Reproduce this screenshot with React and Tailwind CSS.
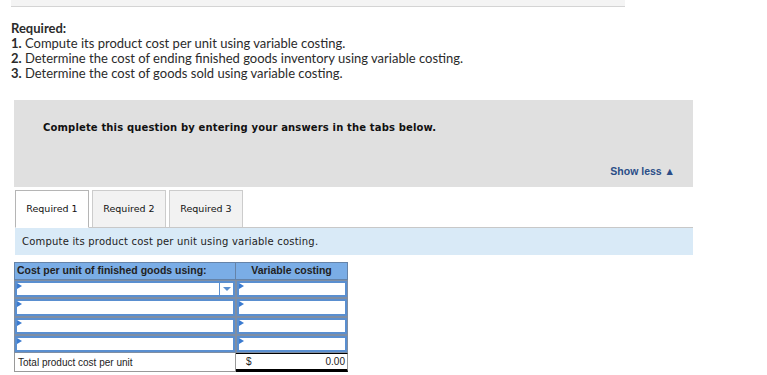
export default function App() {
  const flag = (
    <span className="absolute left-0 top-0 w-0 h-0 border-t-[3px] border-b-[3px] border-l-[5px] border-t-transparent border-b-transparent border-l-[#3b7bd0]" />
  );
  const InputCell = ({ w, dropdown }) => (
    <div className={`${w} h-full border border-[#7f8ea3] bg-white p-0`}>
      <div className="relative h-full border-2 border-[#5a8fd0] bg-white flex justify-end">
        {flag}
        {dropdown && (
          <div className="w-[14px] h-full border-l border-[#5a8fd0] flex items-center justify-center">
            <span className="w-0 h-0 border-l-[4px] border-r-[4px] border-t-[4px] border-l-transparent border-r-transparent border-t-[#5a8fd0]" />
          </div>
        )}
      </div>
    </div>
  );
  return (
    <div className="w-[767px] h-[375px] bg-white overflow-hidden text-[#2b2b2b]">
      <div className="ml-[11px] w-[614px] h-[7px] bg-[#f4f4f4] border-b border-[#d4d4d4]" />
      <div className="ml-[11px] mt-[14px] text-[13px] leading-[15px] font-['Lato',sans-serif]">
        <div className="font-bold">Required:</div>
        <div><span className="font-bold">1.</span> Compute its product cost per unit using variable costing.</div>
        <div><span className="font-bold">2.</span> Determine the cost of ending finished goods inventory using variable costing.</div>
        <div><span className="font-bold">3.</span> Determine the cost of goods sold using variable costing.</div>
      </div>
      <div className="ml-[14px] w-[679px]">
        <div className="mt-[19px] h-[87px] bg-[#e0e0e0] flex flex-col justify-between pl-[29px] pr-[18px] pt-[21px] pb-[9px]">
          <div className="text-[10px] leading-[14px] font-bold tracking-[0.15px] font-['DejaVu_Sans',sans-serif] text-[#111]">
            Complete this question by entering your answers in the tabs below.
          </div>
          <div className="self-end text-[10.5px] leading-[14px] font-bold font-['Liberation_Sans',sans-serif] text-[#2a4d87]">
            Show less ▲
          </div>
        </div>
        <div className="mt-[3px] ml-[1px] flex gap-[3px] border-b border-[#c8c8c8] h-[38px] font-['DejaVu_Sans',sans-serif] text-[9.5px] text-[#111]">
          <div className="w-[74px] -mb-px bg-white border border-[#b5b5b5] border-b-white flex items-center justify-center">Required 1</div>
          <div className="w-[74px] bg-[#f2f2f2] border border-[#cccccc] border-b-0 flex items-center justify-center">Required 2</div>
          <div className="w-[74px] bg-[#f2f2f2] border border-[#cccccc] border-b-0 flex items-center justify-center">Required 3</div>
        </div>
        <div className="ml-[1px] h-[27px] bg-[#d9eaf7] pl-[7px] flex items-center font-['DejaVu_Sans',sans-serif] text-[10px] tracking-[0.2px] text-[#222]">
          Compute its product cost per unit using variable costing.
        </div>
        <div className="mt-[7px] w-[334px] font-['Liberation_Sans',sans-serif] text-[10px] text-[#222]">
          <div className="flex h-[18px] bg-[#7aade6] border border-[#6583a8] font-bold text-[10.5px]">
            <div className="w-[221px] border-r border-[#6583a8] pl-[2px] flex items-center">Cost per unit of finished goods using:</div>
            <div className="flex-1 flex items-center justify-center">Variable costing</div>
          </div>
          <div className="flex h-[18px]"><InputCell w="w-[222px]" dropdown /><InputCell w="flex-1" /></div>
          <div className="flex h-[19px]"><InputCell w="w-[222px]" /><InputCell w="flex-1" /></div>
          <div className="flex h-[18px]"><InputCell w="w-[222px]" /><InputCell w="flex-1" /></div>
          <div className="flex h-[18px]"><InputCell w="w-[222px]" /><InputCell w="flex-1" /></div>
          <div className="flex h-[19px] text-[10px]">
            <div className="w-[222px] border border-[#999] border-t-0 bg-white pl-[3px] flex items-center">Total product cost per unit</div>
            <div className="flex-1 border-t border-black border-b-[3px] border-b-black border-r border-r-[#999] bg-white flex items-center justify-between pl-[10px] pr-[2px]">
              <span>$</span><span>0.00</span>
            </div>
          </div>
        </div>
      </div>
    </div>
  );
}
